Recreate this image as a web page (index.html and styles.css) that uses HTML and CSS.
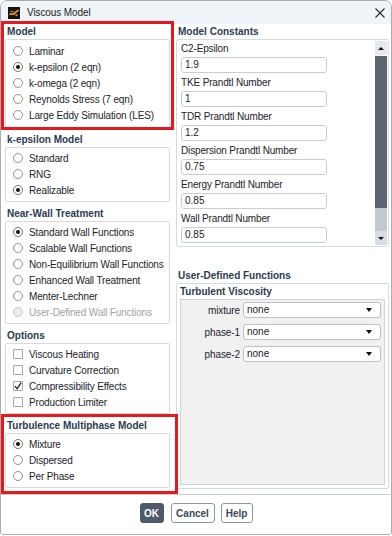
FILE: index.html
```html
<!DOCTYPE html>
<html>
<head>
<meta charset="utf-8">
<title>Viscous Model</title>
<link rel="stylesheet" href="styles.css">
</head>
<body>
<div class="window">
  <div class="titlebar">
    <svg class="app-icon" width="12" height="12" viewBox="0 0 12 12">
      <rect width="12" height="12" fill="#161412"/>
      <path d="M1.5 8 C3 4.5 5 9.5 7 6 C8 4 9.5 4.5 10.5 3" fill="none" stroke="#e8a020" stroke-width="1.6"/>
      <path d="M2 5 C3.5 3 4.5 6 6 4.5" fill="none" stroke="#c26a12" stroke-width="1.2"/>
      <circle cx="8.5" cy="8.2" r="1.1" fill="#d88a1a"/>
    </svg>
    <span class="title">Viscous Model</span>
    <svg class="close" width="10" height="10" viewBox="0 0 10 10">
      <path d="M0.5 0.5 L9.5 9.5 M9.5 0.5 L0.5 9.5" stroke="#2a2a2a" stroke-width="1.1" fill="none"/>
    </svg>
  </div>

  <div class="content">
    <div class="col-left">
      <div class="group-title first">Model</div>
      <div class="group-box model-box">
        <div class="opt"><span class="radio"></span>Laminar</div>
        <div class="opt"><span class="radio on"></span>k-epsilon (2 eqn)</div>
        <div class="opt"><span class="radio"></span>k-omega (2 eqn)</div>
        <div class="opt"><span class="radio"></span>Reynolds Stress (7 eqn)</div>
        <div class="opt"><span class="radio"></span>Large Eddy Simulation (LES)</div>
      </div>

      <div class="group-title">k-epsilon Model</div>
      <div class="group-box">
        <div class="opt"><span class="radio"></span>Standard</div>
        <div class="opt"><span class="radio"></span>RNG</div>
        <div class="opt"><span class="radio on"></span>Realizable</div>
      </div>

      <div class="group-title">Near-Wall Treatment</div>
      <div class="group-box">
        <div class="opt"><span class="radio on"></span>Standard Wall Functions</div>
        <div class="opt"><span class="radio"></span>Scalable Wall Functions</div>
        <div class="opt"><span class="radio"></span>Non-Equilibrium Wall Functions</div>
        <div class="opt"><span class="radio"></span>Enhanced Wall Treatment</div>
        <div class="opt"><span class="radio"></span>Menter-Lechner</div>
        <div class="opt disabled"><span class="radio"></span>User-Defined Wall Functions</div>
      </div>

      <div class="group-title">Options</div>
      <div class="group-box">
        <div class="opt"><span class="check"></span>Viscous Heating</div>
        <div class="opt"><span class="check"></span>Curvature Correction</div>
        <div class="opt"><span class="check">
          <svg width="8" height="8" viewBox="0 0 8 8"><path d="M1 4.2 L3 6.8 L7.2 0.6" fill="none" stroke="#111" stroke-width="1.2"/></svg>
        </span>Compressibility Effects</div>
        <div class="opt"><span class="check"></span>Production Limiter</div>
      </div>

      <div class="group-title">Turbulence Multiphase Model</div>
      <div class="group-box">
        <div class="opt"><span class="radio on"></span>Mixture</div>
        <div class="opt"><span class="radio"></span>Dispersed</div>
        <div class="opt"><span class="radio"></span>Per Phase</div>
      </div>
    </div>

    <div class="col-right">
      <div class="group-title first">Model Constants</div>
      <div class="constants-box">
        <div class="fields">
          <div class="field"><div class="field-label">C2-Epsilon</div><div class="input">1.9</div></div>
          <div class="field"><div class="field-label">TKE Prandtl Number</div><div class="input">1</div></div>
          <div class="field"><div class="field-label">TDR Prandtl Number</div><div class="input">1.2</div></div>
          <div class="field"><div class="field-label">Dispersion Prandtl Number</div><div class="input">0.75</div></div>
          <div class="field"><div class="field-label">Energy Prandtl Number</div><div class="input">0.85</div></div>
          <div class="field"><div class="field-label">Wall Prandtl Number</div><div class="input">0.85</div></div>
        </div>
        <div class="scrollbar">
          <div class="sb-btn"><span class="tri-up"></span></div>
          <div class="sb-thumb"></div>
          <div class="sb-track"></div>
          <div class="sb-btn sb-down"><span class="tri-down"></span></div>
        </div>
      </div>

      <div class="group-title udf-title">User-Defined Functions</div>
      <div class="udf-box">
        <div class="sub-title">Turbulent Viscosity</div>
        <div class="udf-inner">
          <div class="udf-row"><span class="udf-label">mixture</span><div class="select">none<span class="caret"></span></div></div>
          <div class="udf-row"><span class="udf-label">phase-1</span><div class="select">none<span class="caret"></span></div></div>
          <div class="udf-row"><span class="udf-label">phase-2</span><div class="select">none<span class="caret"></span></div></div>
        </div>
      </div>
    </div>
  </div>

  <div class="footer">
    <button class="btn btn-ok">OK</button>
    <button class="btn btn-cancel">Cancel</button>
    <button class="btn btn-help">Help</button>
  </div>

  <div class="mark mark-model"></div>
  <div class="mark mark-multiphase"></div>
</div>
</body>
</html>
```

FILE: styles.css
```css
* { box-sizing: border-box; }

html, body {
  margin: 0;
  padding: 0;
  background: #ffffff;
}

body {
  width: 392px;
  height: 536px;
  font-family: "Liberation Sans", Arial, sans-serif;
  font-size: 10px;
  color: #1c232c;
}

.window {
  position: relative;
  width: 392px;
  height: 535px;
  border: 1px solid #a9adb3;
  border-radius: 7px 7px 3px 3px;
  background: #ffffff;
  display: flex;
  flex-direction: column;
  overflow: hidden;
}

/* ---------- title bar ---------- */
.titlebar {
  flex: none;
  height: 23px;
  background: #eff4f9;
  display: flex;
  align-items: center;
  padding: 0 6px 0 7px;
}

.app-icon { flex: none; display: block; }

.title {
  margin-left: 7px;
  font-size: 10px;
  letter-spacing: -0.1px;
  color: #1a1a1a;
  flex: 1;
}

.close { flex: none; display: block; margin-top: 1px; }

/* ---------- content ---------- */
.content {
  flex: 1;
  display: flex;
  padding: 0 2px 5px 4px;
  gap: 6px;
}

.col-left {
  width: 165px;
  flex: none;
}

.col-right {
  flex: 1;
  display: flex;
  flex-direction: column;
}

.group-title {
  font-weight: bold;
  line-height: 14px;
  padding: 5px 0 0 2px;
  color: #2b3b52;
  white-space: nowrap;
}

.group-title.first { padding-top: 1px; }

.group-box {
  border: 1px solid #d6dbe1;
  border-radius: 2px;
  padding: 2px 0 3px;
}

.group-box.model-box { padding: 3px 0 4px; }

.opt {
  display: flex;
  align-items: center;
  height: 16px;
  padding-left: 7px;
  letter-spacing: -0.15px;
  white-space: nowrap;
}

.radio {
  position: relative;
  flex: none;
  width: 10px;
  height: 10px;
  margin-right: 6px;
  border: 1px solid #8e9297;
  border-radius: 50%;
  background: #ffffff;
}

.radio.on { border-color: #6f7378; }

.radio.on::after {
  content: "";
  position: absolute;
  left: 2px;
  top: 2px;
  width: 4px;
  height: 4px;
  border-radius: 50%;
  background: #111111;
}

.opt.disabled { color: #9ea3a9; }

.opt.disabled .radio {
  background: #ededed;
  border-color: #c6c9cd;
}

.check {
  flex: none;
  width: 10px;
  height: 10px;
  margin-right: 6px;
  border: 1px solid #a2a6ab;
  border-radius: 1px;
  background: #ffffff;
  display: flex;
  align-items: center;
  justify-content: center;
}

.check svg { display: block; }

/* ---------- model constants ---------- */
.constants-box {
  display: flex;
  height: 208px;
  border: 1px solid #d6dbe1;
  border-radius: 2px;
}

.fields {
  flex: 1;
  padding: 1px 0 0 4px;
}

.field { margin-bottom: 2px; }

.field-label {
  line-height: 16px;
  height: 16px;
  white-space: nowrap;
  letter-spacing: -0.15px;
}

.input {
  width: 146px;
  height: 16px;
  border: 1px solid #c8cdd3;
  border-radius: 3px;
  background: #ffffff;
  padding-left: 3px;
  line-height: 14px;
}

.scrollbar {
  flex: none;
  width: 12px;
  margin: 1px 1px 1px 0;
  display: flex;
  flex-direction: column;
}

.sb-btn {
  flex: none;
  height: 14px;
  background: #e6e9ec;
  display: flex;
  align-items: center;
  justify-content: center;
}

.sb-down { background: #d9dde1; }

.tri-up {
  width: 0;
  height: 0;
  border-left: 3px solid transparent;
  border-right: 3px solid transparent;
  border-bottom: 3px solid #111111;
}

.tri-down {
  width: 0;
  height: 0;
  border-left: 3px solid transparent;
  border-right: 3px solid transparent;
  border-top: 3px solid #111111;
}

.sb-thumb {
  flex: none;
  height: 152px;
  margin-top: 1px;
  background: #5d6571;
}

.sb-track {
  flex: 1;
  background: #c3c9cf;
}

/* ---------- user-defined functions ---------- */
.group-title.udf-title { padding-top: 22px; }

.udf-box {
  border: 1px solid #d6dbe1;
  border-radius: 2px;
  padding: 0 3px 3px 3px;
}

.sub-title {
  font-weight: bold;
  line-height: 14px;
  padding-top: 1px;
  color: #2b3b52;
}

.udf-inner {
  height: 186px;
  background: #f1f1f1;
  border: 1px solid #d3d3d3;
  padding: 2px 3px 0 0;
}

.udf-row {
  display: flex;
  align-items: center;
  height: 16px;
  margin-bottom: 6px;
}

.udf-label {
  width: 59px;
  margin-right: 3px;
  text-align: right;
  letter-spacing: -0.1px;
}

.select {
  position: relative;
  flex: 1;
  height: 16px;
  line-height: 14px;
  padding-left: 3px;
  background: #ffffff;
  border: 1px solid #b9c0c8;
  border-radius: 3px;
}

.caret {
  position: absolute;
  right: 8px;
  top: 5px;
  width: 0;
  height: 0;
  border-left: 3px solid transparent;
  border-right: 3px solid transparent;
  border-top: 4px solid #111111;
}

/* ---------- footer ---------- */
.footer {
  flex: none;
  height: 40px;
  border-top: 1px solid #c9cdd2;
  display: flex;
  justify-content: center;
  align-items: flex-start;
  padding-top: 8px;
  gap: 6px;
}

.btn {
  height: 20px;
  padding: 0;
  font-family: "Liberation Sans", Arial, sans-serif;
  font-size: 10px;
  font-weight: bold;
  color: #3b4757;
  background: #ffffff;
  border: 1px solid #8d97a3;
  border-radius: 3px;
}

.btn-ok {
  width: 24px;
  margin-right: 1px;
  color: #ffffff;
  background: #4e5969;
  border-color: #4e5969;
}

.btn-cancel { width: 44px; }
.btn-help { width: 32px; }

/* ---------- red annotation overlays ---------- */
.mark {
  position: absolute;
  border: 3px solid #e31b1e;
  pointer-events: none;
}

.mark-model {
  left: 0;
  top: 20px;
  width: 173px;
  height: 109px;
}

.mark-multiphase {
  left: 0;
  top: 413px;
  width: 177px;
  height: 80px;
}
```
